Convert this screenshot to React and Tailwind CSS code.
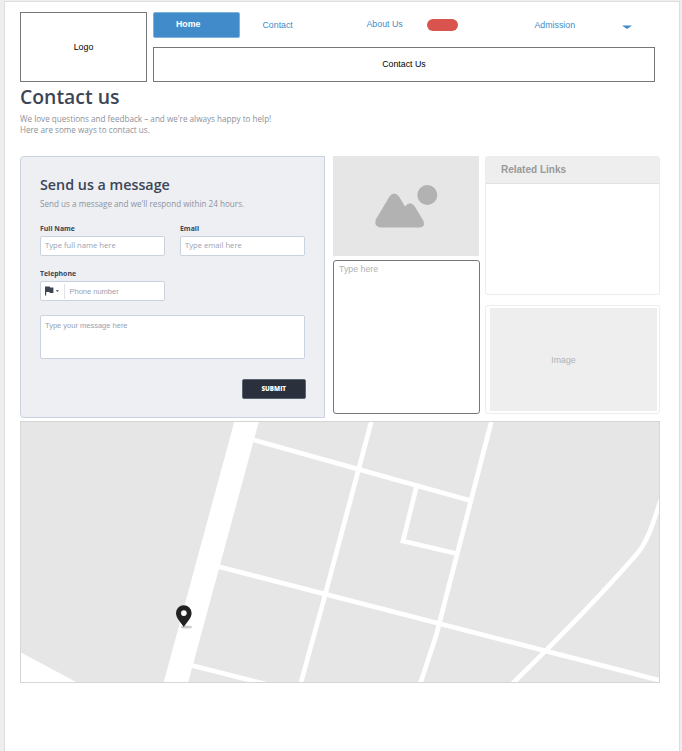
const sans = "font-['Liberation_Sans',Arial,sans-serif]";

function Header() {
  return (
    <header className={`${sans} flex h-[70px] gap-[6px] text-[8.8px]`}>
      <div className="flex w-[127px] items-center justify-center border border-[#777] pt-[2px] text-black">Logo</div>
      <div className="flex w-[502px] flex-col justify-between">
        <nav className="flex h-[26px] text-[#428bca]">
          <a className="flex w-[87px] items-center rounded-[2px] border border-[#7db1de] bg-[#428bca] pl-[22px] font-bold text-white">Home</a>
          <a className="flex w-[104px] items-center pt-[2px] pl-[22.5px]">Contact</a>
          <a className="flex w-[168px] items-center pl-[22.5px]">
            <span className="w-[60.5px]">About Us</span>
            <span className="h-[12px] w-[31px] rounded-full bg-[#d9534f]" />
          </a>
          <a className="flex items-center pt-[2px] pl-[22.5px]">
            <span className="w-[87.5px]">Admission</span>
            <svg className="mt-px h-[4px] w-[10px]" viewBox="0 0 10 4"><path d="M0 0.4H10L5 4Z" fill="#428bca" /></svg>
          </a>
        </nav>
        <div className="flex h-[35px] items-center justify-center border border-[#777] text-black">Contact Us</div>
      </div>
    </header>
  );
}

function Field({ label, placeholder }) {
  return (
    <label className="block w-[125px]">
      <span className="block h-[12px] text-[6.9px] leading-[12px] font-bold text-[#3b4556]">{label}</span>
      <input className="mt-[1px] block h-[20px] w-full rounded-[2px] border border-[#c9d3e0] bg-white px-[4px] pb-[2px] text-[7.65px] placeholder:text-[#98a2b3]" placeholder={placeholder} />
    </label>
  );
}

function ContactForm() {
  return (
    <form className="h-[262px] w-[305px] rounded-l-[4px] border border-[#c9d3e0] bg-[#edeff3] pt-[17px] pl-[19px]">
      <h2 className="h-[22px] text-[14.3px] leading-[22px] font-semibold text-[#3b4556]">Send us a message</h2>
      <p className="mt-[1px] h-[13px] text-[8.15px] leading-[13px] text-[#8d93a1]">Send us a message and we'll respond within 24 hours.</p>
      <div className="mt-[13px] flex gap-[15px]">
        <Field label="Full Name" placeholder="Type full name here" />
        <Field label="Email" placeholder="Type email here" />
      </div>
      <div className="mt-[12px] h-[12px] text-[6.9px] leading-[12px] font-bold text-[#3b4556]">Telephone</div>
      <div className="mt-[1px] flex h-[20px] w-[125px] items-center rounded-[2px] border border-[#c9d3e0] bg-white pl-[4px]">
        <svg className="h-[10px] w-[15px]" viewBox="0 0 15 10" fill="#3b4556">
          <path d="M0 .6H4.7L5.1 1.6H8.4V7H4.8L4.4 6H1.2V9.6H0Z" />
          <path d="M10.7 4.2H14L12.4 6Z" />
        </svg>
        <span className="ml-[4px] h-[15px] w-px bg-[#dfe3e9]" />
        <span className={`${sans} mt-[2px] ml-[4.5px] text-[7.5px] text-[#98a2b3]`}>Phone number</span>
      </div>
      <textarea className={`${sans} mt-[14px] block h-[44px] w-[265px] resize-none rounded-[2px] border border-[#c9d3e0] bg-white px-[4px] pt-[4px] text-[7.5px] leading-[12px] placeholder:text-[#98a2b3]`} placeholder="Type your message here" />
      <button type="button" className="mt-[20px] ml-[202px] flex h-[20px] w-[63.500px] items-center justify-center rounded-[2px] border border-[#5a6370] bg-[#2a313c] text-[6.3px] font-extrabold text-white">SUBMIT</button>
    </form>
  );
}

function Panels() {
  return (
    <div className={`${sans} flex gap-[5px]`}>
      <div className="flex w-[147px] flex-col gap-[4px]">
        <div className="h-[100px] w-[146px] bg-[#e6e6e6]">
          <svg className="h-full w-full" viewBox="0 0 146 100" fill="#b2b2b2">
            <circle cx="94.300" cy="39" r="10" />
            <path d="M56.5 40.500Q61 34.500 66 40.500L72 50.500Q77 44.500 81.500 50L90.500 65Q92.500 71 86.500 71.500H48Q40.500 71 42.800 63.500Z" />
          </svg>
        </div>
        <div className="h-[154px] rounded-[3px] border border-[#777] bg-white pt-[2px] pl-[5px] text-[8.8px] leading-[12px] text-[#b2b2b2]">Type here</div>
      </div>
      <div className="flex w-[175px] flex-col gap-[10px]">
        <section className="h-[139px] rounded-[3px] border border-[#ececec] bg-white">
          <h3 className="h-[27px] border-b border-[#e2e2e2] bg-[#eee] pl-[15px] text-[10px] leading-[26px] font-bold text-[#999]">Related Links</h3>
        </section>
        <div className="h-[109px] rounded-[3px] border border-[#ececec] bg-white py-[2px] pr-[2px] pl-[4px]">
          <div className="flex h-full items-center justify-center bg-[#eee] pt-[2px] pr-[20px] text-[8.8px] text-[#b2b2b2]">Image</div>
        </div>
      </div>
    </div>
  );
}

function StreetMap() {
  return (
    <svg className="mt-[3px] block h-[262px] w-[640px]" viewBox="20 421 640 262">
      <rect x="20" y="421" width="640" height="262" fill="#e6e6e6" />
      <g fill="none" stroke="#fff" strokeWidth="4.700">
        <path d="M254 440L470 500.500M218 566.500L660 680.500M192 665.500L275 686.500M372 419L324 599L300 686M492 419L436 636L419.500 686" />
        <path d="M416.500 486.500L403 541L456 553.500" />
        <path d="M662 496C653 524 648 541 636 555C602 594 552 645 510 686" />
      </g>
      <path d="M234.500 421H259L188 683H163.500ZM20 652L78 683H20Z" fill="#fff" />
      <ellipse cx="186.500" cy="627" rx="5.500" ry="1.500" fill="#cbcbcb" />
      <path d="M183.800 605.200A7.800 7.800 0 0 0 176 613C176 618.500 181.500 623 183.800 627C186 623 191.600 618.500 191.600 613A7.800 7.800 0 0 0 183.800 605.200ZM183.800 610.200A2.900 2.900 0 1 1 183.800 616A2.900 2.900 0 1 1 183.800 610.200Z" fill="#222" fillRule="evenodd" />
      <rect x="20.500" y="421.500" width="639" height="261" fill="none" stroke="#d6d6d6" />
    </svg>
  );
}

export default function App() {
  return (
    <div className="h-[751px] w-[682px] overflow-hidden bg-[#eee] pt-[1px] pl-[4px] font-['Open_Sans','Noto_Sans',sans-serif]">
      <main className="h-[751px] w-[676px] border border-[#dedede] bg-white pt-[10px] pl-[15px]">
        <Header />
        <h1 className="mt-[1px] h-[28px] text-[19.4px] leading-[28px] font-semibold text-[#3b4556]">Contact us</h1>
        <p className="mt-[2px] h-[22px] text-[8.15px] leading-[11px] text-[#8d9199]">
          We love questions and feedback – and we're always happy to help!<br />Here are some ways to contact us.
        </p>
        <div className="mt-[21px] flex gap-[8px]">
          <ContactForm />
          <Panels />
        </div>
        <StreetMap />
      </main>
    </div>
  );
}
